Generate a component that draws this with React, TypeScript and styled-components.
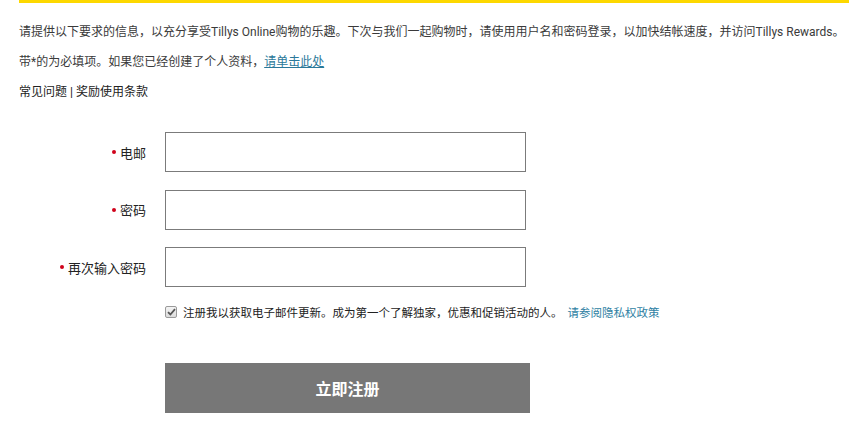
import React from "react";
import styled, { createGlobalStyle } from "styled-components";

const Global = createGlobalStyle`
  html, body { margin: 0; padding: 0; background: #fff; }
  body { font-family: Roboto, "Noto Sans CJK SC", sans-serif; color: #333; }
`;

const Page = styled.div`
  padding-left: 19px;
`;

const TopBar = styled.div`
  height: 3px;
  background: #fdd800;
`;

const Intro = styled.div`
  display: flex;
  flex-direction: column;
  gap: 12px;
  padding-top: 20px;
  font-size: 12px;
  line-height: 18px;
  color: #3a3a3a;
`;

const Para = styled.p<{ $dark?: boolean }>`
  margin: 0;
  white-space: nowrap;
  color: ${(p) => (p.$dark ? "#222" : "#3a3a3a")};
`;

const Link = styled.a`
  color: #2a7899;
  text-decoration: underline;
`;

const Form = styled.div`
  display: grid;
  grid-template-columns: 127px 361px;
  column-gap: 19px;
  row-gap: 17.5px;
  margin-top: 31px;
  align-items: center;
`;

const Label = styled.label`
  display: flex;
  justify-content: flex-end;
  align-items: center;
  gap: 3px;
  font-size: 13px;
  color: #222;
  font-family: "Noto Sans CJK SC", sans-serif;
`;

const Dot = styled.span`
  width: 4px;
  height: 4px;
  border-radius: 50%;
  background: #d0021b;
  margin-right: 1px;
`;

const Input = styled.input`
  box-sizing: border-box;
  height: 40px;
  width: 361px;
  border: 1px solid #7b7b7b;
  margin: 0;
  padding: 0 8px;
  outline: none;
`;

const Bottom = styled.div`
  padding-left: 146px;
`;

const ConsentRow = styled.div`
  display: flex;
  align-items: center;
  gap: 5px;
  margin-top: 18px;
  font-size: 11.5px;
  line-height: 14px;
  color: #222;
  font-family: "Noto Sans CJK SC", sans-serif;
  white-space: nowrap;
`;

const CheckBox = styled.span`
  box-sizing: border-box;
  width: 12px;
  height: 12px;
  border: 1px solid #9a9a9a;
  border-radius: 2px;
  background: linear-gradient(#f4f4f4, #dcdcdc);
  display: inline-flex;
  align-items: center;
  justify-content: center;
  margin-right: 1px;
`;

const PolicyLink = styled.a`
  color: #2f7fa3;
  text-decoration: none;
`;

const Submit = styled.button`
  margin-top: 44px;
  width: 365px;
  height: 50px;
  border: none;
  background: #777;
  color: #fff;
  font-size: 16px;
  font-weight: bold;
  font-family: "Noto Sans CJK SC", sans-serif;
  cursor: pointer;
`;

const fields = ["电邮", "密码", "再次输入密码"];

export default function App() {
  return (
    <Page>
      <Global />
      <TopBar />
      <Intro>
        <Para>
          请提供以下要求的信息，以充分享受Tillys Online购物的乐趣。下次与我们一起购物时，请使用用户名和密码登录，以加快结帐速度，并访问Tillys Rewards。
        </Para>
        <Para>
          带*的为必填项。如果您已经创建了个人资料，<Link href="#">请单击此处</Link>
        </Para>
        <Para $dark>常见问题 | 奖励使用条款</Para>
      </Intro>
      <Form>
        {fields.map((f) => (
          <React.Fragment key={f}>
            <Label>
              <Dot />
              {f}
            </Label>
            <Input type={f.includes("密码") ? "password" : "text"} />
          </React.Fragment>
        ))}
      </Form>
      <Bottom>
        <ConsentRow>
          <CheckBox>
            <svg width="9" height="8" viewBox="0 0 9 8">
              <path d="M1 4.2 L3.4 6.5 L8 1.2" fill="none" stroke="#555" strokeWidth="1.8" />
            </svg>
          </CheckBox>
          注册我以获取电子邮件更新。成为第一个了解独家，优惠和促销活动的人。
          <PolicyLink href="#">请参阅隐私权政策</PolicyLink>
        </ConsentRow>
        <Submit>立即注册</Submit>
      </Bottom>
    </Page>
  );
}
